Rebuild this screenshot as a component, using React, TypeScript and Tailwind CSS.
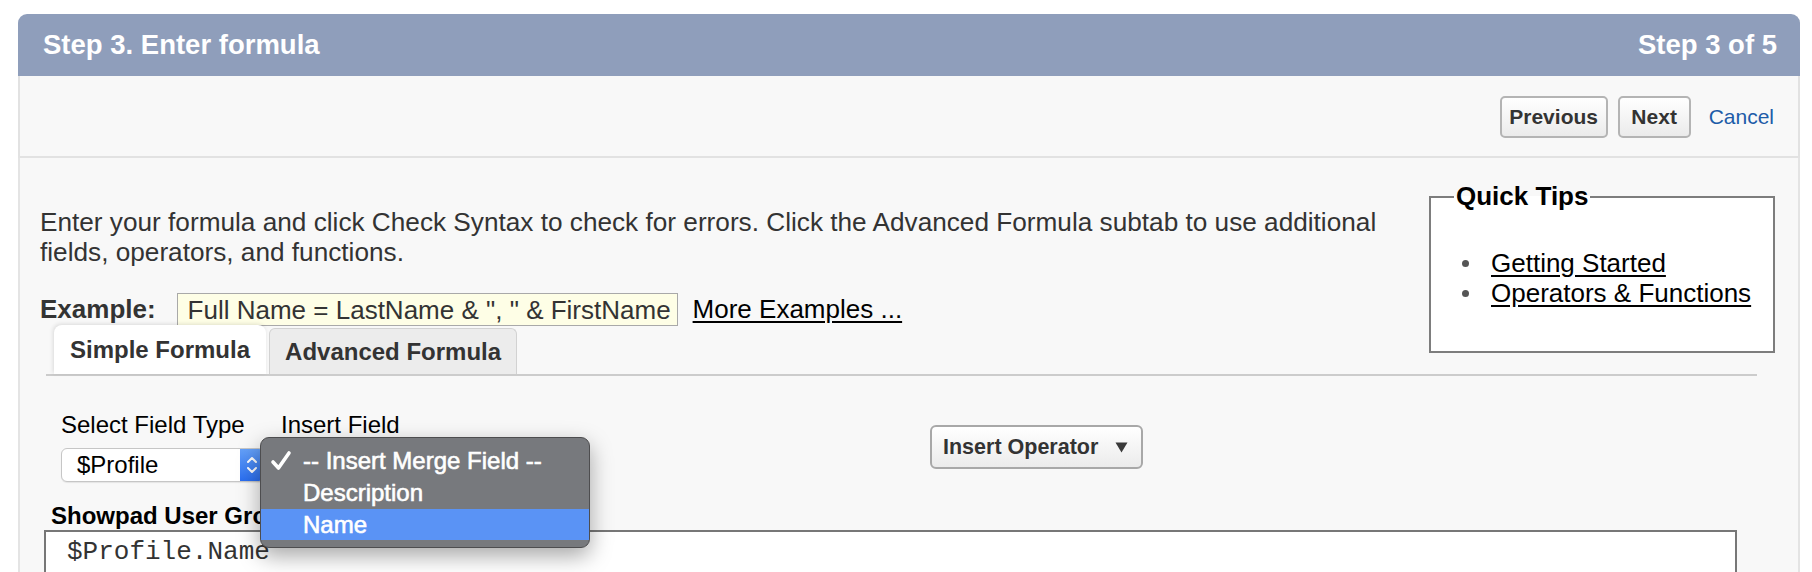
export default function App() {
  return (
    <div className="min-h-screen bg-white pt-[14px] pl-[18px] pr-[12px] font-['Liberation_Sans',Arial,sans-serif]">
      {/* Header */}
      <div className="flex h-[62px] items-center justify-between rounded-t-[9px] bg-[#8f9ebb] pl-[25px] pr-[23px] text-[27.5px] font-bold text-white">
        <span>Step 3. Enter formula</span>
        <span>Step 3 of 5</span>
      </div>

      {/* Toolbar */}
      <div className="flex h-[82px] items-center justify-end border-x-2 border-b-2 border-[#e2e2e2] bg-[#f8f8f8] pr-[24px] pt-[2px]">
        <button className="h-[42px] w-[108px] rounded-[5px] border-2 border-[#b4b4b4] bg-gradient-to-b from-white to-[#ebebeb] text-[21px] font-bold text-[#333]">
          Previous
        </button>
        <button className="ml-[10px] h-[42px] w-[73px] rounded-[5px] border-2 border-[#b4b4b4] bg-gradient-to-b from-white to-[#ebebeb] text-[21px] font-bold text-[#333]">
          Next
        </button>
        <span className="ml-[18px] text-[21px] text-[#1d5ca8]">Cancel</span>
      </div>

      {/* Body */}
      <div className="border-x-2 border-[#e4e4e4] bg-[#f8f8f8] pb-[40px] pl-[20px] pr-[23px] pt-[24px]">
        <fieldset className="float-right w-[346px] border-[2.5px] border-[#7d7d7d] bg-white pb-[43px]">
          <legend className="ml-[23px] px-[2px] text-[26px] font-bold leading-[29px] text-black">
            Quick Tips
          </legend>
          <ul className="ml-[31px] mt-[37px] text-[26px] leading-[30px] text-black">
            <li className="flex items-center">
              <span className="mr-[22px] h-[7px] w-[7px] rounded-full bg-[#555]" />
              <span className="underline underline-offset-[3px]">Getting Started</span>
            </li>
            <li className="flex items-center">
              <span className="mr-[22px] h-[7px] w-[7px] rounded-full bg-[#555]" />
              <span className="underline underline-offset-[3px]">Operators &amp; Functions</span>
            </li>
          </ul>
        </fieldset>

        <p className="mt-[25px] text-[26.2px] leading-[30px] text-[#333]">
          Enter your formula and click Check Syntax to check for errors. Click the Advanced Formula subtab to use additional
          <br />
          fields, operators, and functions.
        </p>

        <div className="mt-[26px] flex h-[33px] items-center text-[26px]">
          <span className="mr-[21px] font-bold text-[#333]">Example:</span>
          <span className="flex h-[33px] items-center border border-[#a9a9a9] bg-[#fefee6] pl-[10px] pr-[6px] leading-none text-[#333]">
            Full Name = LastName &amp; ", " &amp; FirstName
          </span>
          <span className="ml-[15px] text-black underline underline-offset-[3px]">More Examples ...</span>
        </div>

        {/* Tabs */}
        <div className="-mt-[1px] ml-[6px] mr-[18px] h-[51px] border-b-2 border-[#cccccc] pl-[8px] text-[0px] leading-[0]">
          <span className="inline-flex h-[49px] items-center rounded-t-[8px] bg-white px-[16px] align-bottom text-[24px] font-bold leading-none text-[#333] shadow-[-1px_-1px_4px_rgba(0,0,0,0.12)]">
            Simple Formula
          </span>
          <span className="ml-[3px] inline-flex h-[46px] items-center rounded-t-[6px] border border-b-0 border-[#d2d2d2] bg-[#ececec] px-[15px] align-bottom text-[24px] font-bold leading-none text-[#333]">
            Advanced Formula
          </span>
        </div>

        {/* Fields row */}
        <div className="relative mt-[35px] flex pl-[21px]">
          <div className="flex w-[220px] flex-col">
            <span className="text-[24px] leading-[28px] text-black">Select Field Type</span>
            <div className="mt-[9px] flex h-[34px] w-[204px] overflow-hidden rounded-[6px] border border-[#c6c6c6] bg-white shadow-[0_1px_1px_rgba(0,0,0,0.08)]">
              <span className="flex flex-1 items-center pl-[15px] text-[24px] text-black">$Profile</span>
              <span className="flex w-[24px] items-center justify-center bg-gradient-to-b from-[#64a0f8] to-[#2a6ef0]">
                <svg width="12" height="22" viewBox="0 0 12 22" fill="none" stroke="white" strokeWidth="2" strokeLinecap="round" strokeLinejoin="round">
                  <path d="M2 8 L6 4 L10 8" />
                  <path d="M2 14 L6 18 L10 14" />
                </svg>
              </span>
            </div>
          </div>
          <div className="flex w-[649px] flex-col">
            <span className="text-[24px] leading-[28px] text-black">Insert Field</span>
          </div>
          <div className="mt-[14px]">
            <button className="flex h-[44px] w-[213px] items-center rounded-[6px] border-2 border-[#a8a8a8] bg-gradient-to-b from-white to-[#ebebeb] pl-[11px] text-[21.5px] font-bold text-[#333]">
              Insert Operator
              <svg className="ml-[17px]" width="13" height="11" viewBox="0 0 13 11">
                <path d="M0.5 0.5 L12.5 0.5 L6.5 10.5 Z" fill="#3a3a3a" />
              </svg>
            </button>
          </div>

          {/* Native popup menu overlay */}
          <div className="absolute left-[220px] top-[26px] z-10 w-[330px] rounded-[9px] border border-[#4d4d4f] bg-[#77797d] py-[7px] text-[24px] text-white shadow-[0_8px_22px_rgba(0,0,0,0.35)] [-webkit-text-stroke:0.6px_white]">
            <div className="flex h-[32px] items-center">
              <svg className="ml-[9px] mr-[11px]" width="22" height="22" viewBox="0 0 22 22" fill="none" stroke="white" strokeWidth="3.6" strokeLinecap="round" strokeLinejoin="round">
                <path d="M3 12 L8.5 18 L19 3" />
              </svg>
              <span>-- Insert Merge Field --</span>
            </div>
            <div className="flex h-[32px] items-center pl-[42px]">Description</div>
            <div className="flex h-[31px] items-center bg-[#5a93f5] pl-[42px]">Name</div>
          </div>
        </div>

        <div className="ml-[11px] mt-[20px] text-[24px] font-bold leading-[28px] text-black">
          Showpad User Group (Text) =
        </div>
        <div className="ml-[4px] h-[120px] w-[1693px] border-2 border-[#777] bg-white pl-[21px] pt-[5px] font-['Liberation_Mono','Courier_New',monospace] text-[26px] leading-[30px] text-[#333]">
          $Profile.Name
        </div>
      </div>
    </div>
  );
}
